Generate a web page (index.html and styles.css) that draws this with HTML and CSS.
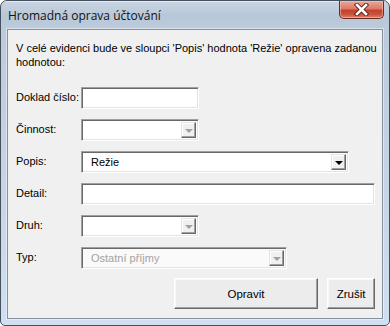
FILE: index.html
```html
<!DOCTYPE html>
<html lang="cs">
<head>
<meta charset="utf-8">
<title>Hromadná oprava účtování</title>
<link rel="stylesheet" href="styles.css">
</head>
<body>
<div class="window">
  <div class="titlebar">
    <span class="title">Hromadná oprava účtování</span>
    <span class="close">
      <svg width="17" height="13" viewBox="0 0 17 13">
        <path d="M4 2 L13 11 M13 2 L4 11" stroke="#5a1e16" stroke-width="4.4" stroke-linecap="square" fill="none"/>
        <path d="M4 2 L13 11 M13 2 L4 11" stroke="#ffffff" stroke-width="2.6" stroke-linecap="square" fill="none"/>
      </svg>
    </span>
  </div>
  <div class="client">
    <p class="info">V celé evidenci bude ve sloupci 'Popis' hodnota 'Režie' opravena zadanou hodnotou:</p>
    <div class="form">
      <label class="lbl">Doklad číslo:</label>
      <div class="field short"><span class="box"></span></div>

      <label class="lbl">Činnost:</label>
      <div class="field short"><span class="box combo"><span class="val"></span><span class="drop"><i class="tri dis"></i></span></span></div>

      <label class="lbl">Popis:</label>
      <div class="field popis"><span class="box combo"><span class="val">Režie</span><span class="drop"><i class="tri"></i></span></span></div>

      <label class="lbl">Detail:</label>
      <div class="field full"><span class="box"></span></div>

      <label class="lbl">Druh:</label>
      <div class="field short"><span class="box combo"><span class="val"></span><span class="drop"><i class="tri dis"></i></span></span></div>

      <label class="lbl">Typ:</label>
      <div class="field typ"><span class="box combo disabled"><span class="val">Ostatní příjmy</span><span class="drop"><i class="tri dis"></i></span></span></div>
    </div>
    <div class="buttons">
      <button class="btn wide">Opravit</button>
      <button class="btn">Zrušit</button>
    </div>
  </div>
</div>
</body>
</html>
```
FILE: styles.css
```css
html, body {
  margin: 0;
  padding: 0;
  background: #ffffff;
}
.window {
  box-sizing: border-box;
  width: 390px;
  height: 326px;
  border: 1px solid #44505e;
  border-radius: 7px 7px 5px 5px;
  background: linear-gradient(to bottom, #c9d5e2 0px, #b9c8d8 14px, #bccbdb 28px, #c6d6e8 60%, #cfe0f2 100%);
  display: flex;
  flex-direction: column;
  overflow: hidden;
  font-family: "Liberation Sans", Arial, sans-serif;
  font-size: 11px;
  color: #000;
}
.titlebar {
  height: 28px;
  display: flex;
  justify-content: space-between;
  align-items: flex-start;
  box-shadow: inset 0 1px 0 rgba(255,255,255,0.55);
}
.title {
  font-family: "Open Sans", "Noto Sans", sans-serif;
  font-size: 12px;
  line-height: 16px;
  margin: 7px 0 0 7px;
  color: #111;
}
.close {
  box-sizing: border-box;
  width: 45px;
  height: 18px;
  margin-right: 5px;
  border: 1px solid #6c2b22;
  border-top: none;
  border-radius: 0 0 5px 5px;
  background: linear-gradient(to bottom, #e9a898 0%, #dd7a66 45%, #c3422c 55%, #c9553c 80%, #e0846c 100%);
  box-shadow: inset 0 0 0 1px rgba(255,215,200,0.45);
  display: flex;
  align-items: center;
  justify-content: center;
}
.close svg { display: block; }
.client {
  flex: 1;
  margin: 0 6px 6px 6px;
  border: 1px solid #84919f;
  box-shadow: 0 0 0 1px rgba(255,255,255,0.45);
  background: #f0f0f0;
  padding: 11px 7px 0 8px;
}
.info {
  margin: 0 -7px 0 0;
  line-height: 14px;
}
.form {
  display: grid;
  grid-template-columns: 65px 1fr;
  grid-auto-rows: 22px;
  row-gap: 10px;
  margin-top: 18px;
}
.lbl {
  padding-top: 3px;
  line-height: 14px;
  white-space: nowrap;
}
.field { display: flex; }
.field.short .box { width: 118px; }
.field.popis .box { width: 268px; }
.field.full .box { width: 100%; }
.field.typ .box { width: 206px; }
.box {
  box-sizing: border-box;
  height: 22px;
  background: #ffffff;
  border: 1px solid;
  border-color: #a0a0a0 #ffffff #ffffff #a0a0a0;
  box-shadow: inset 1px 1px 0 #696969, inset -1px -1px 0 #e3e3e3;
  display: flex;
  align-items: stretch;
}
.combo .val {
  flex: 1;
  padding: 3px 0 0 9px;
  line-height: 14px;
}
.disabled { background: #fafafa; }
.disabled .val { color: #a3a3a3; }
.drop {
  box-sizing: border-box;
  width: 15px;
  margin: 2px 2px 2px 0;
  background: #f0f0f0;
  border: 1px solid;
  border-color: #e3e3e3 #696969 #696969 #e3e3e3;
  box-shadow: inset -1px -1px 0 #a0a0a0, inset 1px 1px 0 #ffffff;
  display: flex;
  align-items: center;
  justify-content: center;
}
.tri {
  width: 0;
  height: 0;
  border-left: 4px solid transparent;
  border-right: 4px solid transparent;
  border-top: 4px solid #000;
  margin-top: 1px;
}
.tri.dis { border-top-color: #a0a0a0; }
.buttons {
  display: flex;
  justify-content: flex-end;
  gap: 9px;
  margin-top: 9px;
}
.btn {
  box-sizing: border-box;
  height: 31px;
  width: 48px;
  padding: 0;
  font-family: "Liberation Sans", Arial, sans-serif;
  font-size: 11.5px;
  color: #000;
  background: #ececec;
  border: 1px solid;
  border-color: #ffffff #696969 #696969 #ffffff;
  box-shadow: inset -1px -1px 0 #a0a0a0, inset 1px 1px 0 #f8f8f8;
  border-radius: 0;
}
.btn.wide { width: 144px; }
```
